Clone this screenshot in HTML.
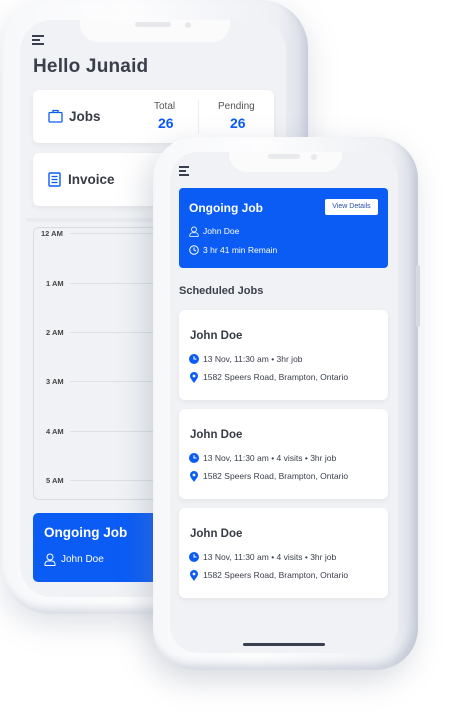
<!DOCTYPE html>
<html><head><meta charset="utf-8"><style>
*{margin:0;padding:0;box-sizing:border-box}
body{width:470px;height:720px;background:#fff;position:relative;overflow:hidden;font-family:"Liberation Sans",sans-serif;color:#373b47}
.abs{position:absolute}
.phone{position:absolute;background:linear-gradient(90deg,#f7f8fa,#fdfdfe 40%,#eef0f4 90%,#d9dde6);box-shadow:0 10px 30px rgba(120,130,150,.25),inset -4px -6px 8px rgba(160,170,190,.35)}
.screen{position:absolute;background:#f0f2f5;overflow:hidden}
.notch{position:absolute;background:#fbfbfc;border-radius:0 0 18px 18px}
.card{position:absolute;background:#fff;border-radius:6px;box-shadow:0 2px 6px rgba(0,0,0,.06)}
.b{font-weight:bold}
.blue{color:#0a5cf5}
.ham{position:absolute;width:13px}
.ham i{display:block;height:1.6px;background:#3a4050;margin-bottom:3px}
.sm{font-size:8.5px;color:#3a3f4b}
</style></head><body>
<!-- back phone -->
<div class="phone" style="left:2px;top:0;width:306px;height:614px;border-radius:48px"></div>
<div class="screen" style="left:20px;top:20px;width:266px;height:577px;border-radius:32px">
  <div class="notch" style="left:60px;top:0;width:150px;height:22px"></div>
  <div class="abs" style="left:115px;top:2px;width:36px;height:5px;border-radius:3px;background:#e6e8ec"></div>
  <div class="abs" style="left:165px;top:2px;width:6px;height:6px;border-radius:3px;background:#e6e8ec"></div>
  <div class="ham" style="left:12px;top:15px;width:12px"><i style="width:12px;margin-bottom:2.5px"></i><i style="width:8px;margin-bottom:2.5px"></i><i style="width:12px"></i></div>
  <div class="abs b" style="left:13px;top:36px;font-size:19px;color:#3a3f4b;letter-spacing:.2px">Hello Junaid</div>
  <div class="card" style="left:13px;top:70px;width:241px;height:53px">
    <svg class="abs" style="left:15px;top:19px" width="15" height="14" viewBox="0 0 15 14"><rect x="1" y="3.5" width="13" height="9.5" rx="1" fill="none" stroke="#0a5cf5" stroke-width="1.3"/><path d="M5 3.5V1.5h5v2" fill="none" stroke="#0a5cf5" stroke-width="1.3"/></svg>
    <div class="abs b" style="left:36px;top:19px;font-size:13.5px">Jobs</div>
    <div class="abs" style="left:121px;top:11px;font-size:10px;color:#555">Total</div>
    <div class="abs b blue" style="left:125px;top:25px;font-size:14px">26</div>
    <div class="abs" style="left:165px;top:10px;width:1px;height:34px;background:#eee"></div>
    <div class="abs" style="left:185px;top:11px;font-size:10px;color:#555">Pending</div>
    <div class="abs b blue" style="left:197px;top:25px;font-size:14px">26</div>
  </div>
  <div class="card" style="left:13px;top:133px;width:241px;height:53px">
    <svg class="abs" style="left:15px;top:19px" width="13" height="15" viewBox="0 0 13 15"><rect x="1" y="1" width="11" height="13" rx="1" fill="none" stroke="#0a5cf5" stroke-width="1.4"/><path d="M3.5 4.5h6M3.5 7.5h6M3.5 10.5h6" stroke="#0a5cf5" stroke-width="1.3"/></svg>
    <div class="abs b" style="left:35px;top:19px;font-size:13.5px">Invoice</div>
  </div>
  <div class="abs" style="left:6px;top:198px;width:260px;height:4px;background:#e9ebef;border-radius:0 0 4px 4px"></div>
  <div class="abs" style="left:13px;top:207px;width:250px;height:273px;border:1px solid #d8dbe1;border-radius:6px"></div>
  <div class="abs b" style="left:21px;top:209px;font-size:7.5px;color:#444">12 AM</div>
  <div class="abs b" style="left:26px;top:259px;font-size:7.5px;color:#444">1 AM</div>
  <div class="abs b" style="left:26px;top:308px;font-size:7.5px;color:#444">2 AM</div>
  <div class="abs b" style="left:26px;top:357px;font-size:7.5px;color:#444">3 AM</div>
  <div class="abs b" style="left:26px;top:407px;font-size:7.5px;color:#444">4 AM</div>
  <div class="abs b" style="left:26px;top:456px;font-size:7.5px;color:#444">5 AM</div>
  <div class="abs" style="left:50px;top:213px;width:210px;height:1px;background:#dcdfe4"></div>
  <div class="abs" style="left:50px;top:263px;width:210px;height:1px;background:#dcdfe4"></div>
  <div class="abs" style="left:50px;top:312px;width:210px;height:1px;background:#dcdfe4"></div>
  <div class="abs" style="left:50px;top:361px;width:210px;height:1px;background:#dcdfe4"></div>
  <div class="abs" style="left:50px;top:411px;width:210px;height:1px;background:#dcdfe4"></div>
  <div class="abs" style="left:50px;top:460px;width:210px;height:1px;background:#dcdfe4"></div>
  <div class="abs" style="left:13px;top:493px;width:241px;height:69px;background:#0a5cf5;border-radius:5px">
    <div class="abs b" style="left:11px;top:12px;font-size:13.5px;color:#fff">Ongoing Job</div>
    <svg class="abs" style="left:11px;top:40px" width="12" height="13" viewBox="0 0 12 13"><circle cx="6" cy="4" r="3" fill="none" stroke="#fff" stroke-width="1"/><path d="M1 12.5v-1.5a3 3 0 0 1 3-3h4a3 3 0 0 1 3 3v1.5z" fill="none" stroke="#fff" stroke-width="1"/></svg>
    <div class="abs" style="left:28px;top:41px;font-size:10px;color:#fff">John Doe</div>
  </div>
</div>
<!-- front phone -->
<div class="phone" style="left:153px;top:137px;width:265px;height:533px;border-radius:42px;box-shadow:-6px 10px 30px rgba(120,130,150,.3),inset -5px -6px 8px rgba(160,170,190,.4)"></div>
<div class="abs" style="left:416px;top:265px;width:4px;height:62px;background:#d5d9e2;border-radius:2px"></div>
<div class="screen" style="left:170px;top:152px;width:228px;height:501px;border-radius:28px">
  <div class="notch" style="left:59px;top:0;width:113px;height:20px"></div>
  <div class="abs" style="left:98px;top:2px;width:32px;height:5px;border-radius:3px;background:#e8eaee"></div>
  <div class="abs" style="left:141px;top:2px;width:6px;height:6px;border-radius:3px;background:#e8eaee"></div>
  <div class="ham" style="left:9px;top:14px;width:10px"><i style="width:10px;margin-bottom:2.5px"></i><i style="width:7px;margin-bottom:2.5px"></i><i style="width:10px"></i></div>
  <div class="abs" style="left:9px;top:36px;width:209px;height:80px;background:#0a5cf5;border-radius:4px">
    <div class="abs b" style="left:10px;top:13px;font-size:12px;color:#fff">Ongoing Job</div>
    <div class="abs" style="left:146px;top:11px;width:53px;height:16px;background:#fff;border-radius:2px;font-size:7px;color:#2a4fb0;text-align:center;line-height:16px">View Details</div>
    <svg class="abs" style="left:10px;top:38px" width="10" height="11" viewBox="0 0 12 13"><circle cx="6" cy="4" r="3" fill="none" stroke="#fff" stroke-width="1"/><path d="M1 12.5v-1.5a3 3 0 0 1 3-3h4a3 3 0 0 1 3 3v1.5z" fill="none" stroke="#fff" stroke-width="1"/></svg>
    <div class="abs" style="left:24px;top:38px;font-size:8.5px;color:#fff">John Doe</div>
    <svg class="abs" style="left:10px;top:57px" width="10" height="10" viewBox="0 0 10 10"><circle cx="5" cy="5" r="4.3" fill="none" stroke="#fff" stroke-width="1"/><path d="M5 2.5V5l2 1" fill="none" stroke="#fff" stroke-width="1"/></svg>
    <div class="abs" style="left:24px;top:57px;font-size:8.5px;color:#fff">3 hr 41 min Remain</div>
  </div>
  <div class="abs b" style="left:9px;top:133px;font-size:11px;color:#3a3f4b">Scheduled Jobs</div>

  <div class="card" style="left:9px;top:158px;width:209px;height:90px">
    <div class="abs b" style="left:11px;top:20px;font-size:11.5px">John Doe</div>
    <svg class="abs" style="left:10px;top:44px" width="10" height="10" viewBox="0 0 10 10"><circle cx="5" cy="5" r="5" fill="#0a5cf5"/><path d="M5 2.3V5h2.5" fill="none" stroke="#fff" stroke-width="1.1"/></svg>
    <div class="abs sm" style="left:24px;top:44px">13 Nov, 11:30 am • 3hr job</div>
    <svg class="abs" style="left:11px;top:62px" width="8" height="11" viewBox="0 0 8 11"><path d="M4 11C1.5 7.5 0 5.8 0 4a4 4 0 0 1 8 0c0 1.8-1.5 3.5-4 7z" fill="#0a5cf5"/><circle cx="4" cy="4" r="1.4" fill="#fff"/></svg>
    <div class="abs sm" style="left:24px;top:62px">1582 Speers Road, Brampton, Ontario</div>
  </div>
  <div class="card" style="left:9px;top:257px;width:209px;height:90px">
    <div class="abs b" style="left:11px;top:20px;font-size:11.5px">John Doe</div>
    <svg class="abs" style="left:10px;top:44px" width="10" height="10" viewBox="0 0 10 10"><circle cx="5" cy="5" r="5" fill="#0a5cf5"/><path d="M5 2.3V5h2.5" fill="none" stroke="#fff" stroke-width="1.1"/></svg>
    <div class="abs sm" style="left:24px;top:44px">13 Nov, 11:30 am • 4 visits • 3hr job</div>
    <svg class="abs" style="left:11px;top:62px" width="8" height="11" viewBox="0 0 8 11"><path d="M4 11C1.5 7.5 0 5.8 0 4a4 4 0 0 1 8 0c0 1.8-1.5 3.5-4 7z" fill="#0a5cf5"/><circle cx="4" cy="4" r="1.4" fill="#fff"/></svg>
    <div class="abs sm" style="left:24px;top:62px">1582 Speers Road, Brampton, Ontario</div>
  </div>
  <div class="card" style="left:9px;top:356px;width:209px;height:90px">
    <div class="abs b" style="left:11px;top:20px;font-size:11.5px">John Doe</div>
    <svg class="abs" style="left:10px;top:44px" width="10" height="10" viewBox="0 0 10 10"><circle cx="5" cy="5" r="5" fill="#0a5cf5"/><path d="M5 2.3V5h2.5" fill="none" stroke="#fff" stroke-width="1.1"/></svg>
    <div class="abs sm" style="left:24px;top:44px">13 Nov, 11:30 am • 4 visits • 3hr job</div>
    <svg class="abs" style="left:11px;top:62px" width="8" height="11" viewBox="0 0 8 11"><path d="M4 11C1.5 7.5 0 5.8 0 4a4 4 0 0 1 8 0c0 1.8-1.5 3.5-4 7z" fill="#0a5cf5"/><circle cx="4" cy="4" r="1.4" fill="#fff"/></svg>
    <div class="abs sm" style="left:24px;top:62px">1582 Speers Road, Brampton, Ontario</div>
  </div>
  <div class="abs" style="left:73px;top:491px;width:82px;height:3px;border-radius:2px;background:#3a4050"></div>
</div>
</body></html>
